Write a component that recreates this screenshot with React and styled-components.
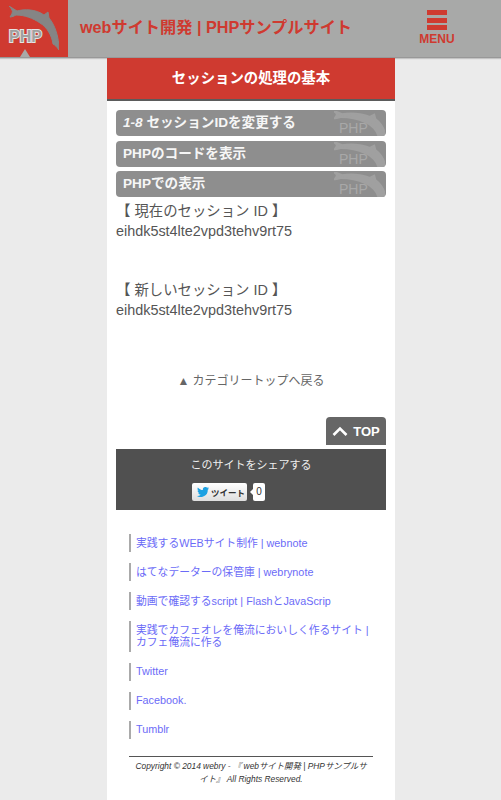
import React from "react";
import styled, { createGlobalStyle } from "styled-components";

const GlobalStyle = createGlobalStyle`
  html, body {
    margin: 0;
    padding: 0;
    background: #ebebeb;
    font-family: "Liberation Sans", "Noto Sans CJK JP", sans-serif;
  }
`;

const Dolphin = ({ color, className }) => (
  <svg className={className} viewBox="9 6 50 44" preserveAspectRatio="none" aria-hidden="true">
    <path
      fill={color}
      stroke={color}
      d="M9 6 L17 11 C24 9 36 9 44 15 L48 12 L49 18 C55 25 59 37 59 50 C57 47 55 45 53 44 C52 36 47 27 40 23 C33 18 24 15 16 15 C14 16 12 17 10 17 C12 14 13 12 12 10 C11 8 10 7 9 6 Z"
    />
  </svg>
);

const links = [
  "実践するWEBサイト制作 | webnote",
  "はてなデーターの保管庫 | webrynote",
  "動画で確認するscript | FlashとJavaScrip",
  "実践でカフェオレを俺流においしく作るサイト | カフェ俺流に作る",
  "Twitter",
  "Facebook.",
  "Tumblr",
];

const App = () => {
  return (
    <>
      <GlobalStyle />
      <Header>
        <LogoBox>
          <LogoDolphin color="#858585" />
          <LogoText>PHP</LogoText>
          <LogoNotch />
        </LogoBox>
        <SiteTitle>webサイト開発 | PHPサンプルサイト</SiteTitle>
        <MenuButton>
          <MenuBar />
          <MenuBar />
          <MenuBar />
          <MenuLabel>MENU</MenuLabel>
        </MenuButton>
      </Header>
      <Main>
        <PageTitle>セッションの処理の基本</PageTitle>
        <Content>
          <Bars>
            <Bar>
              <BarText><Num>1-8</Num> セッションIDを変更する</BarText>
              <BarMark>
                <BarDolphin color="#a0a0a0" />
                <BarPhp>PHP</BarPhp>
              </BarMark>
            </Bar>
            <Bar>
              <BarText>PHPのコードを表示</BarText>
              <BarMark>
                <BarDolphin color="#a0a0a0" />
                <BarPhp>PHP</BarPhp>
              </BarMark>
            </Bar>
            <Bar>
              <BarText>PHPでの表示</BarText>
              <BarMark>
                <BarDolphin color="#a0a0a0" />
                <BarPhp>PHP</BarPhp>
              </BarMark>
            </Bar>
          </Bars>
          <Sessions>
            <SessionBlock>
              <SessionLine>【 現在のセッション ID 】</SessionLine>
              <SessionLine>eihdk5st4lte2vpd3tehv9rt75</SessionLine>
            </SessionBlock>
            <SessionBlock>
              <SessionLine>【 新しいセッション ID 】</SessionLine>
              <SessionLine>eihdk5st4lte2vpd3tehv9rt75</SessionLine>
            </SessionBlock>
          </Sessions>
          <BackLink>▲ カテゴリートップへ戻る</BackLink>
          <TopRow>
            <TopButton>
              <svg width="16" height="10" viewBox="0 0 16 10" aria-hidden="true">
                <path d="M1.5 9 L8 2.5 L14.5 9" fill="none" stroke="#fff" strokeWidth="2.6" />
              </svg>
              TOP
            </TopButton>
          </TopRow>
          <ShareBox>
            <ShareTitle>このサイトをシェアする</ShareTitle>
            <ShareRow>
              <TweetButton>
                <svg width="12" height="10" viewBox="0 0 24 20" aria-hidden="true">
                  <path
                    fill="#1da1e2"
                    d="M24 2.400c-.9.4-1.800.7-2.800.8 1-.6 1.800-1.600 2.200-2.700-1 .6-2 1-3.100 1.200A4.900 4.900 0 0 0 11.900 6.200C7.800 6 4.100 4 1.700.9.400 3.200 1 6.100 3.200 7.500c-.8 0-1.500-.2-2.200-.6 0 2.400 1.700 4.400 3.900 4.900-.7.2-1.500.2-2.200.1.600 2 2.400 3.400 4.600 3.400A9.900 9.900 0 0 1 0 17.800 13.900 13.900 0 0 0 21.500 5.400c1-.7 1.800-1.600 2.500-3z"
                  />
                </svg>
                ツイート
              </TweetButton>
              <TweetCount>0</TweetCount>
            </ShareRow>
          </ShareBox>
          <LinkList>
            {links.map((l) => (
              <LinkItem key={l}>{l}</LinkItem>
            ))}
          </LinkList>
          <Footer>Copyright © 2014 webry - 『 webサイト開発 | PHPサンプルサイト』 All Rights Reserved.</Footer>
        </Content>
      </Main>
    </>
  );
};

export default App;

const Header = styled.header`
  display: flex;
  align-items: stretch;
  height: 57px;
  background: #a8a9a8;
  border-bottom: 1px solid #989898;
  box-shadow: 0 1px 1px #c4c4c4;
`;

const LogoBox = styled.div`
  position: relative;
  width: 68px;
  flex: none;
  background: #cf3a30;
`;

const LogoDolphin = styled(Dolphin)`
  position: absolute;
  left: 9px;
  top: 6px;
  width: 50px;
  height: 44px;
`;

const LogoText = styled.span`
  position: absolute;
  left: 9px;
  top: 28px;
  font-size: 16px;
  line-height: 18px;
  font-weight: 700;
  color: #a0a0a0;
  -webkit-text-stroke: 2px #e4e4e4;
  paint-order: stroke fill;
`;

const LogoNotch = styled.div`
  position: absolute;
  left: 20px;
  bottom: 0;
  border-left: 5.5px solid transparent;
  border-right: 5.5px solid transparent;
  border-bottom: 8px solid #a8a9a8;
`;

const SiteTitle = styled.div`
  margin-left: 12px;
  width: 320px;
  flex: none;
  align-self: center;
  padding-bottom: 5px;
  font-size: 16.2px;
  font-weight: 700;
  color: #cf3a30;
  white-space: nowrap;
`;

const MenuButton = styled.div`
  margin-left: 20px;
  margin-top: 10px;
  width: 34px;
  display: flex;
  flex-direction: column;
  align-items: center;
`;

const MenuBar = styled.div`
  flex: none;
  width: 20px;
  height: 5px;
  margin-bottom: 2.5px;
  background: #cf3a30;
`;

const MenuLabel = styled.div`
  font-size: 12px;
  line-height: 12px;
  font-weight: 700;
  color: #cf3a30;
`;

const Main = styled.main`
  width: 288px;
  margin: 0 auto 0 107px;
  background: #fff;
`;

const PageTitle = styled.h1`
  margin: 0;
  height: 41px;
  line-height: 40px;
  text-align: center;
  background: #cf3a30;
  border-bottom: 2px solid #5b5b5b;
  font-size: 14.4px;
  font-weight: 700;
  color: #fff;
`;

const Content = styled.div`
  padding: 9px 9px 0;
`;

const Bars = styled.div`
  display: flex;
  flex-direction: column;
  gap: 4.5px;
`;

const Bar = styled.div`
  position: relative;
  height: 26px;
  overflow: hidden;
  border-radius: 4px;
  background: #8e8e8e;
  padding-left: 7px;
  line-height: 25px;
  font-size: 13.6px;
  font-weight: 700;
  color: #f6f6f6;
`;

const BarText = styled.span`
  position: relative;
`;

const Num = styled.i`
  font-style: italic;
`;

const BarMark = styled.div`
  position: absolute;
  right: 0;
  top: 0;
  width: 54px;
  height: 26px;
`;

const BarDolphin = styled(Dolphin)`
  position: absolute;
  right: 1px;
  top: 1px;
  width: 51px;
  height: 29px;
  path {
    stroke-width: 3px;
  }
`;

const BarPhp = styled.span`
  position: absolute;
  left: 7px;
  top: 11px;
  font-size: 14px;
  line-height: 15px;
  font-weight: 400;
  color: #a8a8a8;
`;

const Sessions = styled.div`
  margin-top: 4px;
`;

const SessionBlock = styled.div`
  height: 79px;
`;

const SessionLine = styled.div`
  font-size: 14.4px;
  line-height: 20px;
  color: #555;
`;

const BackLink = styled.div`
  margin-top: 13px;
  text-align: center;
  font-size: 12px;
  line-height: 18px;
  color: #666;
`;

const TopRow = styled.div`
  display: flex;
  justify-content: flex-end;
  margin-top: 27px;
`;

const TopButton = styled.div`
  display: flex;
  align-items: center;
  justify-content: center;
  gap: 5px;
  width: 60px;
  height: 28px;
  border-radius: 4px 4px 0 0;
  background: #666;
  font-size: 13px;
  font-weight: 700;
  color: #fff;
`;

const ShareBox = styled.div`
  height: 61px;
  padding-top: 8px;
  box-sizing: border-box;
  margin-top: 4px;
  background: #505050;
  text-align: center;
`;

const ShareTitle = styled.div`
  font-size: 11px;
  line-height: 16px;
  color: #eee;
`;

const ShareRow = styled.div`
  display: flex;
  align-items: center;
  margin: 10px 0 0 76px;
`;

const TweetButton = styled.div`
  display: flex;
  align-items: center;
  gap: 2px;
  box-sizing: border-box;
  width: 55px;
  height: 18px;
  padding-left: 5px;
  border-radius: 2px;
  background: linear-gradient(#fff, #dedede);
  font-size: 8.5px;
  font-weight: 700;
  color: #333;
  white-space: nowrap;
`;

const TweetCount = styled.div`
  position: relative;
  margin-left: 6px;
  width: 12px;
  height: 18px;
  line-height: 18px;
  border-radius: 2px;
  background: #fff;
  font-size: 10px;
  color: #333;
  &::before {
    content: "";
    position: absolute;
    left: -3px;
    top: 6px;
    border-top: 3px solid transparent;
    border-bottom: 3px solid transparent;
    border-right: 3px solid #fff;
  }
`;

const LinkList = styled.ul`
  list-style: none;
  margin: 24px 0 0;
  padding: 0 13px;
  display: flex;
  flex-direction: column;
  gap: 11px;
`;

const LinkItem = styled.li`
  border-left: 2px solid #aaa;
  padding: 2.75px 0 2.75px 5px;
  font-size: 10.8px;
  line-height: 12.5px;
  color: #6b6bf7;
`;

const Footer = styled.footer`
  margin: 17.5px 13px 0;
  padding: 3px 4px 0;
  height: 40px;
  border-top: 1px solid #555;
  text-align: center;
  font-size: 8.4px;
  line-height: 13px;
  font-style: italic;
  color: #333;
`;
